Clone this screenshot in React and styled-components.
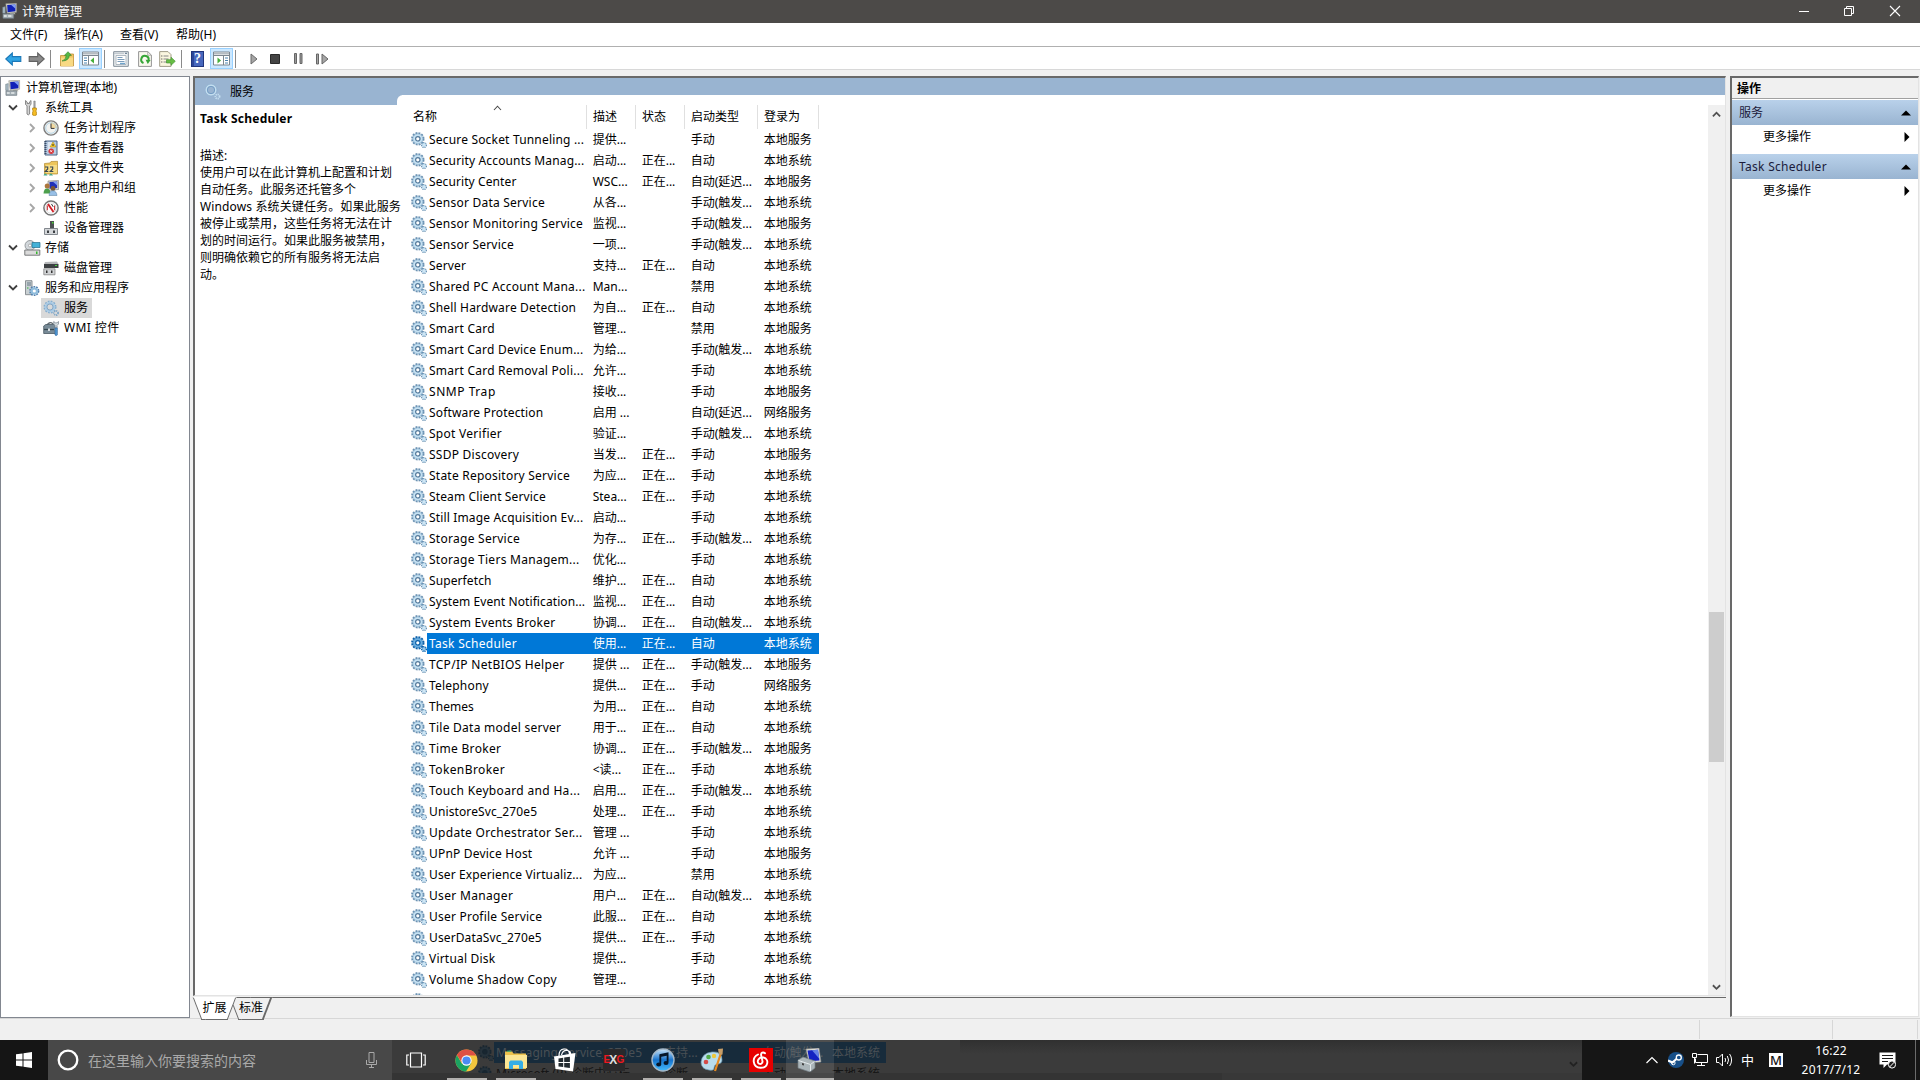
import React from "react";
import styled, { createGlobalStyle, css } from "styled-components";

const GlobalStyle = createGlobalStyle`
  * { box-sizing: border-box; }
  body {
    margin: 0;
    overflow: hidden;
    background: #f0f0f0;
    color: #000;
    font: 12px/20px "Noto Sans", "Noto Sans CJK SC", sans-serif;
  }
  svg { display: block; flex: none; }
`;

const Desktop = styled.div`
  width: 1920px;
  height: 1080px;
  display: flex;
  flex-direction: column;
  overflow: hidden;
  white-space: nowrap;
`;

/* ---------- window chrome ---------- */

const TitleBar = styled.header`
  height: 23px;
  flex: none;
  display: flex;
  align-items: center;
  padding: 0 19px 2px 2px;
  background: #4c4a48;
  color: #fff;
`;
const WindowTitle = styled.span`
  flex: 1;
  padding-left: 4px;
  line-height: 20px;
  padding-top: 2px;
`;
const WindowButtons = styled.div`
  display: flex;
  gap: 34px;
`;
const MenuBar = styled.nav`
  height: 24px;
  flex: none;
  display: flex;
  padding: 1px 0 0 10px;
  gap: 16px;
  background: #fff;
  border-bottom: 1px solid #b0b0b0;
`;
const MenuItem = styled.span`
  width: ${(p) => p.$w}px;
  line-height: 22px;
  letter-spacing: ${(p) => p.$track || 0}px;
`;
const Toolbar = styled.div`
  height: 23px;
  flex: none;
  display: flex;
  align-items: center;
  padding-top: 1px;
  background: #fff;
  border-bottom: 1px solid #d8d8d8;
`;
const ToolButton = styled.div`
  width: ${(p) => p.$w}px;
  margin-left: ${(p) => p.$ml || 0}px;
  height: 21px;
  display: flex;
  align-items: center;
  justify-content: center;
  flex: none;
  ${(p) =>
    p.$on &&
    css`
      background: #cce8ff;
      border: 1px solid #99d1ff;
    `}
`;
const ToolSeparator = styled.i`
  width: 1px;
  height: 18px;
  background: #8a8a8a;
  margin-left: ${(p) => p.$ml}px;
`;
const Workspace = styled.main`
  height: 948px;
  flex: none;
  display: flex;
  padding-top: 6px;
`;

/* ---------- console tree ---------- */

const TreePanel = styled.aside`
  width: 190px;
  height: 942px;
  flex: none;
  padding-top: 1px;
  background: #fff;
  border: 1px solid #828790;
`;
const TreeRow = styled.div`
  height: 20px;
  display: flex;
  align-items: center;
  padding-left: ${(p) => [4, 5, 24][p.$level]}px;
`;
const TreeArrow = styled.span`
  width: 13px;
  display: flex;
  justify-content: center;
  flex: none;
`;
const TreeLabel = styled.span`
  display: flex;
  align-items: center;
  height: 20px;
  margin-left: ${(p) => p.$ml}px;
  padding: 0 4px 0 2px;
  gap: 5px;
  letter-spacing: ${(p) => p.$track || 0}px;
  background: ${(p) => (p.$selected ? "#d9d9d9" : "transparent")};
`;
const TreeIcon = styled.span`
  width: 16px;
  flex: none;
`;

/* ---------- centre panel ---------- */

const Center = styled.section`
  width: 1533px;
  margin-left: 3px;
  flex: none;
  display: flex;
  flex-direction: column;
`;
const ServicePane = styled.div`
  height: 920px;
  flex: none;
  display: flex;
  flex-direction: column;
  background: #fff;
  border-style: solid;
  border-width: 2px 1px 1px 2px;
  border-color: #696969 #e3e3e3 #e3e3e3 #696969;
`;
const PaneHeader = styled.div`
  height: 17px;
  flex: none;
  background: #99b4d1;
`;
const PaneBody = styled.div`
  flex: 1;
  min-height: 0;
  display: flex;
`;
const DetailColumn = styled.div`
  width: 202px;
  flex: none;
`;
const DetailHeader = styled.div`
  height: 27px;
  margin-top: -17px;
  display: flex;
  align-items: center;
  padding: 1px 0 0 10px;
  gap: 9px;
  background: #99b4d1;
`;
const DetailText = styled.div`
  padding: 4px 0 0 5px;
  line-height: 17px;
`;
const DetailName = styled.div`
  height: 38px;
  line-height: 20px;
  font-weight: 700;
  letter-spacing: 0.24px;
`;
const DetailLine = styled.div`
  letter-spacing: ${(p) => p.$track || 0}px;
`;
const ListColumn = styled.div`
  flex: 1;
  min-width: 0;
  display: flex;
  flex-direction: column;
  overflow: hidden;
`;
const HeaderCorner = styled.div`
  height: 10px;
  flex: none;
  background: linear-gradient(#99b4d1, #99b4d1) 0 0 / 5px 10px no-repeat;
`;
const CornerFill = styled.div`
  height: 10px;
  background: #fff;
  border-top-left-radius: 6px;
`;
const ListHeader = styled.div`
  height: 24px;
  flex: none;
  display: flex;
  padding-left: 9px;
`;
const HeaderCell = styled.div`
  width: ${(p) => p.$w}px;
  height: 24px;
  padding: 2px 0 0 ${(p) => p.$pl || 6}px;
  line-height: 20px;
  border-right: 1px solid #e0e0e0;
  position: relative;
`;
const SortMark = styled.svg`
  position: absolute;
  left: 87px;
  top: 0;
`;
const Rows = styled.div`
  flex: 1;
  min-height: 0;
  overflow: hidden;
  padding-left: 14px;
`;
const Row = styled.div`
  height: 21px;
  display: flex;
  align-items: center;
`;
const RowCells = styled.div`
  height: 21px;
  width: 392px;
  display: flex;
  line-height: 21px;
  padding-left: 2px;
  color: ${(p) => (p.$selected ? "#fff" : "#000")};
  background: ${(p) => (p.$selected ? "#0078d7" : "transparent")};
`;
const Cell = styled.span`
  width: ${(p) => p.$w}px;
  flex: none;
  letter-spacing: ${(p) => p.$track || 0}px;
`;
const ScrollBar = styled.div`
  width: 17px;
  flex: none;
  margin-top: 10px;
  display: flex;
  flex-direction: column;
  align-items: center;
  background: #f0f0f0;
`;
const ScrollEnd = styled.div`
  height: 17px;
  padding-top: 1px;
  display: flex;
  align-items: center;
`;
const ScrollTrack = styled.div`
  flex: 1;
  width: 15px;
  padding-top: 490px;
`;
const ScrollThumb = styled.div`
  height: 150px;
  background: #cdcdcd;
`;
const TabStrip = styled.div`
  height: 21px;
  margin-top: 1px;
  display: flex;
  border-top: 1px solid #696969;
`;
const Tab = styled.div`
  width: ${(p) => p.$w}px;
  height: 21px;
  margin: -1px 0 0 ${(p) => p.$ml}px;
  position: relative;
  text-align: center;
  line-height: 22px;
  z-index: ${(p) => (p.$active ? 2 : 1)};
  &::before,
  &::after {
    content: "";
    position: absolute;
    z-index: -1;
    top: 0;
    height: 21px;
    width: 60%;
    background: ${(p) => (p.$active ? "#fff" : "#f0f0f0")};
    border-bottom: 1px solid #696969;
    border-top: 1px solid ${(p) => (p.$active ? "#fff" : "#696969")};
  }
  &::before {
    left: 0;
    transform: skewX(21deg);
    border-left: 1px solid #696969;
  }
  &::after {
    right: 0;
    transform: skewX(-21deg);
    border-right: ${(p) => (p.$active ? 1 : 2)}px solid #696969;
  }
`;

/* ---------- actions panel ---------- */

const ActionsPanel = styled.aside`
  width: 189px;
  height: 941px;
  margin-left: 4px;
  flex: none;
  background: #fff;
  border-style: solid;
  border-width: 2px 1px 1px 2px;
  border-color: #696969 #e3e3e3 #e3e3e3 #696969;
`;
const ActionsTitle = styled.div`
  height: 21px;
  padding-left: 5px;
  font-weight: 700;
  line-height: 22px;
  background: #f0f0f0;
  border-bottom: 1px solid #a0a0a0;
`;
const ActionGroup = styled.div`
  height: 25px;
  margin-top: ${(p) => p.$mt}px;
  display: flex;
  align-items: center;
  justify-content: space-between;
  padding: 0 7px 0 7px;
  color: #1b1b3a;
  letter-spacing: ${(p) => p.$track || 0}px;
  background: linear-gradient(#b9d1ea, #99b4d1);
`;
const ActionItem = styled.div`
  height: 24px;
  display: flex;
  align-items: center;
  justify-content: space-between;
  padding: 0 8px 0 31px;
`;

/* ---------- status bar ---------- */

const StatusBar = styled.footer`
  height: 22px;
  flex: none;
  display: flex;
  justify-content: flex-end;
  padding: 1px 2px 1px 0;
  border-top: 1px solid #d7d7d7;
`;
const StatusCell = styled.div`
  width: ${(p) => p.$w}px;
  border-right: 1px solid #d7d7d7;
`;

/* ---------- taskbar ---------- */

const Taskbar = styled.footer`
  height: 40px;
  flex: none;
  display: flex;
  position: relative;
  background: #161616;
  color: #fff;
`;
const StartButton = styled.div`
  width: 48px;
  display: flex;
  align-items: center;
  justify-content: center;
  background: #151515;
`;
const SearchBox = styled.div`
  width: 344px;
  display: flex;
  align-items: center;
  padding: 0 15px 0 9px;
  gap: 9px;
  background: #484848;
  color: #a9a9a9;
  font-size: 14px;
`;
const SearchHint = styled.span`
  flex: 1;
  padding-top: 2px;
`;
const TaskArea = styled.div`
  width: 1190px;
  display: flex;
  position: relative;
  background:
    linear-gradient(#343434, #343434) 0 33px / 830px 7px no-repeat,
    linear-gradient(#3b3b3b 33px, #383838 33px);
`;
const Backdrop = styled.div`
  position: absolute;
  left: 86px;
  top: 2px;
  width: 410px;
  height: 31px;
  overflow: hidden;
`;
const BackdropRow = styled.div`
  display: flex;
  align-items: center;
  height: 21px;
  color: ${(p) => (p.$selected ? "#494f54" : "#151515")};
`;
const BackdropCells = styled.div`
  width: 392px;
  height: 21px;
  display: flex;
  padding-left: 2px;
  line-height: 22px;
  background: ${(p) => (p.$selected ? "#172b3b" : "transparent")};
`;
const TaskShade = styled.div`
  position: absolute;
  left: 568px;
  right: 0;
  top: 0;
  height: 14px;
  background: linear-gradient(#303030, #3b3b3b00);
`;
const BackdropArrow = styled.div`
  position: absolute;
  right: 4px;
  top: 20px;
`;
const TaskButton = styled.div`
  width: ${(p) => p.$w || 49}px;
  height: 40px;
  padding-right: 2px;
  display: flex;
  align-items: center;
  justify-content: center;
  position: relative;
  background: ${(p) => (p.$active ? "rgba(255,255,255,0.1)" : "transparent")};
  &::after {
    content: "";
    display: ${(p) => (p.$open ? "block" : "none")};
    position: absolute;
    bottom: 0;
    left: ${(p) => (p.$active ? 0 : 4)}px;
    right: ${(p) => (p.$active ? 0 : 5)}px;
    height: 2px;
    background: #b2b0ae;
  }
`;
const TaskViewButton = styled(TaskButton)`
  width: 51px;
  padding-right: 3px;
`;
const Tray = styled.div`
  flex: 1;
  display: flex;
  align-items: center;
  padding-left: 64px;
`;
const TrayItem = styled.div`
  width: ${(p) => p.$w}px;
  margin-right: ${(p) => p.$mr || 0}px;
  display: flex;
  justify-content: center;
  flex: none;
`;
const InputMark = styled.span`
  font: 13px/16px "Noto Sans CJK SC", sans-serif;
`;
const ModeBox = styled.span`
  width: 14px;
  height: 14px;
  background: #fff;
  color: #111;
  font: 500 13px/14px "Noto Sans", sans-serif;
  text-align: center;
`;
const Clock = styled.div`
  width: 62px;
  margin-right: 17px;
  text-align: center;
  font-size: 12px;
  line-height: 19px;
  letter-spacing: 0.2px;
`;
const ShowDesktop = styled.i`
  width: 5px;
  height: 40px;
  margin-left: auto;
  border-left: 1px solid #6b6b6b;
`;

/* ---------- icons ---------- */

const GearIcon = ({ size = 16, selected, dark }) => {
  const edge = dark ? "#182630" : selected ? "#0a5fa8" : "#6b92b3";
  const body = dark ? "#25323b" : selected ? "#5aa2d8" : "#b3d6ec";
  const hub = dark ? "#25323b" : selected ? "#8cc4ee" : "#e9f4fb";
  return (
    <svg width={size} height={size} viewBox="0 0 16 16" fill="none">
      <circle cx="6.800" cy="6.800" r="5.700" stroke={edge} strokeWidth="2" strokeDasharray="1.900 1.080" />
      <circle cx="6.800" cy="6.800" r="5.100" fill={body} stroke={edge} strokeWidth=".4" />
      <circle cx="6.800" cy="6.800" r="3.700" stroke={hub} strokeWidth=".8" opacity=".6" />
      <circle cx="6.800" cy="6.800" r="2.200" fill={dark ? edge : "#fff"} stroke={dark || selected ? edge : "#54799a"} strokeWidth="1.200" />
      <circle cx="13" cy="13.100" r="2.300" stroke={edge} strokeWidth="1.500" strokeDasharray="1.100 .700" />
      <circle cx="13" cy="13.100" r="1.400" stroke={body} strokeWidth="1.300" />
    </svg>
  );
};

const TreeGearIcon = () => (
  <svg width="16" height="16" viewBox="0 0 16 16" fill="none">
    <circle cx="7" cy="7" r="5.600" stroke="#86aecf" strokeWidth="1.800" strokeDasharray="1.800 1.130" />
    <circle cx="7" cy="7" r="4.300" stroke="#a9cbe6" strokeWidth="2" />
    <circle cx="7" cy="7" r="3.100" stroke="#6c97be" strokeWidth=".8" />
    <circle cx="13" cy="13" r="2.100" stroke="#7ba4c7" strokeWidth="1.700" strokeDasharray="1.100 .700" />
  </svg>
);

const ServiceHeaderIcon = () => (
  <svg width="16" height="16" viewBox="0 0 16 16" fill="none">
    <circle cx="6" cy="6" r="4.900" stroke="#c5dff0" strokeWidth="2" />
    <circle cx="6" cy="6" r="3.700" stroke="#6f9ac2" strokeWidth=".9" />
    <circle cx="6" cy="6" r="5.900" stroke="#7fa5c8" strokeWidth=".5" />
    <circle cx="12.500" cy="12.500" r="2.100" stroke="#c5dff0" strokeWidth="1.800" strokeDasharray="1.100 .700" />
  </svg>
);

const ComputerIcon = ({ size = 16 }) => (
  <svg width={size} height={size} viewBox="0 0 17 17">
    <path d="M4 .8 15.500.3v9.500L5.500 11z" fill="#d6d6cc" stroke="#8d8d86" strokeWidth=".6" />
    <path d="M5.500 2 14.300 1.600v7.200L6 9.800z" fill="#1020b8" />
    <path d="M9.500 1.800 14.300 1.600v4.600z" fill="#7f9df2" />
    <path d="M9 10h4l1.500 2H8z" fill="#b5b5ab" />
    <path d="M.7 4.500 3.500 3.800V11H.7z" fill="#a5b7c1" stroke="#6a7880" strokeWidth=".5" />
    <path d="M1 11.500h11.500v4.800H1z" fill="#a2adb3" stroke="#68737b" strokeWidth=".7" />
    <path d="M2 13h3v1.500H2zm4.500 0H10v1.500H6.500z" fill="#e7eced" />
  </svg>
);

const ToolsIcon = () => (
  <svg width="16" height="16" viewBox="0 0 16 16">
    <path d="M1.500.500v4L3 5.800V14q1.200 1.800 2.600 0V5.800L7 4.500v-4L5.400 2v1.500H3.200V2z" fill="#d4d4d4" stroke="#707070" strokeWidth=".8" />
    <path d="M9.800 1h1.400v7H9.800z" fill="#aaa" stroke="#777" strokeWidth=".5" />
    <path d="M8.600 8h3.800v2l-.7 1 .7 1v3q-1.800 1.200-3.800 0v-3l.7-1-.7-1z" fill="#f6bd24" stroke="#ad7c08" strokeWidth=".7" />
  </svg>
);

const ClockIcon = () => (
  <svg width="16" height="16" viewBox="0 0 16 16">
    <circle cx="8" cy="8" r="7.100" fill="#f3f3f0" stroke="#7e7e7e" strokeWidth="1.400" />
    <path d="M8 2a6 6 0 0 1 6 6H8z" fill="#f2d9a0" />
    <circle cx="8" cy="8" r="5.300" fill="none" stroke="#a3cde5" strokeWidth=".8" />
    <path d="M8 3.500V8.400h3.500" fill="none" stroke="#333" />
  </svg>
);

const EventIcon = () => (
  <svg width="16" height="16" viewBox="0 0 16 16">
    <path d="M2 1h12v14H2z" fill="#b7cbe2" stroke="#4c6485" />
    <path d="M2.500 1v14" stroke="#3b4d67" strokeWidth="2" strokeDasharray="1 1" />
    <path d="M5 3h4M5 5h3M5 7h3M5 9h2" stroke="#fff" />
    <path d="m10 2 3 5H7z" fill="#ffd42e" stroke="#ae8100" strokeWidth=".5" />
    <path d="M10 4v2" stroke="#222" />
    <circle cx="8.200" cy="11.200" r="2.700" fill="#d8373b" />
    <path d="m7.200 10.200 2 2m0-2-2 2" stroke="#fff" strokeWidth=".8" />
  </svg>
);

const SharedIcon = () => (
  <svg width="16" height="16" viewBox="0 0 16 16">
    <path d="M1.500 3.500 7 3l1-1.500 6.500-.2V14h-13z" fill="#edc55b" stroke="#b18b32" strokeWidth=".7" />
    <path d="M3 5h11v8H3z" fill="#f6dc86" />
    <path d="M2 7h2.700v2L2.300 11.500h3M7 7h2.700v2l-2.400 2.500h3" fill="none" stroke="#374655" strokeWidth="1.100" />
    <path d="M.5 15.500q1.500-4 4 0zm5.500 0q1.800-4 4 0z" fill="#46a88b" />
  </svg>
);

const UsersIcon = () => (
  <svg width="16" height="16" viewBox="0 0 16 16">
    <path d="m5 1 10.500-.5V9.500L5 10.500z" fill="#d6d6d1" stroke="#7a7a76" strokeWidth=".6" />
    <path d="m6.500 2 7.700-.4v6.500l-7.700.700z" fill="#2030b8" />
    <path d="m10 1.800 4.200-.2v4z" fill="#7f9df2" />
    <circle cx="4.200" cy="6" r="2.500" fill="#ad763e" />
    <path d="M.5 13.500Q1 8 4.200 8.500T7.500 13.500z" fill="#4da04d" />
    <circle cx="10" cy="8.500" r="2.400" fill="#7a5530" />
    <path d="M6 15.500q.5-5 4-4.800t4 4.800z" fill="#97bfe6" stroke="#557d9e" strokeWidth=".5" />
  </svg>
);

const PerfIcon = () => (
  <svg width="16" height="16" viewBox="0 0 16 16">
    <circle cx="8" cy="8" r="7.100" fill="#fff" stroke="#757575" strokeWidth="1.500" />
    <circle cx="8" cy="8" r="5.200" fill="none" stroke="#d4d4d4" strokeWidth=".7" />
    <path d="M4.300 5.500v4.800M11.600 5.500v4.800" stroke="#c82c32" strokeWidth="1.100" />
    <path d="m5 4 5.500 8" stroke="#d21e25" strokeWidth="1.900" />
    <path d="m8.500 4 1.700 2.800" stroke="#333" />
  </svg>
);

const DeviceIcon = () => (
  <svg width="16" height="16" viewBox="0 0 16 16">
    <path d="M7 1h4v8H7z" fill="#4d5153" />
    <path d="M9 2h1.500v1.500H9z" fill="#49db37" />
    <path d="M1.500 8.500h13v6h-13z" fill="#d4d7da" stroke="#777d83" strokeWidth=".9" />
    <path d="M4 10.500h2v2.500H4zm6 0h2v2.500h-2z" fill="#3b3e42" />
  </svg>
);

const StorageIcon = () => (
  <svg width="17" height="16" viewBox="0 0 17 16">
    <circle cx="6" cy="5.500" r="5" fill="#d2d7db" stroke="#84898d" strokeWidth=".8" />
    <circle cx="6" cy="5.500" r="1.500" fill="#fff" stroke="#888" strokeWidth=".6" />
    <path d="M8 2.500h8v5H8z" fill="#43b1d7" stroke="#216e8e" strokeWidth=".7" />
    <path d="M.8 10h15v5.200H.8z" fill="#dadada" stroke="#77797a" />
    <path d="M12 11.500h1.500V14H12z" fill="#35b72c" />
  </svg>
);

const DiskIcon = () => (
  <svg width="16" height="16" viewBox="0 0 16 16">
    <path d="m2 2 12-.5 1.500 2.700H1z" fill="#b6b8ba" />
    <path d="M1 4h14.500v4H1z" fill="#3d4143" />
    <path d="M12 5h2v1h-2z" fill="#44d83d" />
    <path d="M.8 8.800H12v6H.8z" fill="#d1d3d5" stroke="#777" strokeWidth=".7" />
    <path d="M3 10.500h1.500V13H3zm5 0h1.500V13H8z" fill="#333" />
  </svg>
);

const ServerGearIcon = () => (
  <svg width="16" height="16" viewBox="0 0 16 16" fill="none">
    <path d="M1.500.7H8v14H1.500z" fill="#c9d0d3" stroke="#80878b" strokeWidth=".9" />
    <path d="M3 3h4M3 5h4" stroke="#657783" />
    <path d="M3 8h1.500" stroke="#2daf39" />
    <circle cx="10.300" cy="11" r="4.200" stroke="#527fad" strokeWidth="1.800" strokeDasharray="1.700 .940" />
    <circle cx="10.300" cy="11" r="2.700" fill="#fff" stroke="#8fbcdc" strokeWidth="2.200" />
  </svg>
);

const WmiIcon = () => (
  <svg width="17" height="16" viewBox="0 0 17 16">
    <path d="M4 5q3-4 6-1" fill="none" stroke="#636b70" strokeWidth="1.300" />
    <path d="m.7 6 2-1.500h9l2 1.500v7.500H.7z" fill="#788b97" stroke="#4a5963" strokeWidth=".8" />
    <path d="M1 9.500h10" stroke="#374850" strokeWidth="1.300" />
    <path d="M5 8.500h2V11H5z" fill="#dae0e3" />
    <path d="M10.700 1.500V4l1.300 1.500V8h2V5.500L15.500 4V1.500L14 2.800h-1.700z" fill="#d5dce0" stroke="#65717a" strokeWidth=".6" />
    <path d="M12 8h2.300v7l-1 .8-1.300-.8z" fill="#539bd5" stroke="#286097" strokeWidth=".6" />
  </svg>
);

const ArrowIcon = ({ flip, fill, edge }) => (
  <svg width="17" height="16" viewBox="0 0 17 16">
    <path
      transform={flip ? "translate(17 0) scale(-1 1)" : undefined}
      d="M.8 8 7.300 2v3.600h8.500v4.800H7.300V14z"
      fill={fill}
      stroke={edge}
      strokeWidth="1.100"
    />
  </svg>
);

const UpFolderIcon = () => (
  <svg width="16" height="16" viewBox="0 0 16 16">
    <path d="M1.500 4.500h5L8 3h6.500v12h-13z" fill="#efc363" stroke="#c39338" strokeWidth=".8" />
    <path d="M2 6.500h12V15H2z" fill="#f8d983" />
    <path d="M3 10Q7 9 7.200 4.400H5.400L9 .7l3.400 3.700h-2Q9.800 10 3 10z" fill="#54b845" stroke="#2e8228" strokeWidth=".6" />
  </svg>
);

const PaneIcon = ({ right }) => (
  <svg width="17" height="15" viewBox="0 0 17 15">
    <path d="M.5 1h16v13H.5z" fill="#fff" stroke="#7d8790" />
    <path d="M1 2.500h15" stroke="#b4bbc1" strokeWidth="2" />
    <path d="M.5 4.500h16" stroke="#7d8790" />
    <path d={right ? "M10.5 5v9" : "M6.5 5v9"} stroke="#7d8790" />
    <path d={right ? "M12 7h3M12 9.5h3M12 12h3" : "M2 7h3M2 9.5h3M2 12h3"} stroke="#4c84b0" />
    <path d={right ? "m4.5 6.5 3.5 3-3.5 3z" : "m12 6.5-3.5 3 3.5 3z"} fill="#45ae39" />
  </svg>
);

const PropertiesIcon = () => (
  <svg width="16" height="16" viewBox="0 0 16 16">
    <path d="M.7.7h14.600v14.600H.7z" fill="#edf0f2" stroke="#7f8b96" />
    <path d="M1 2.300h10" stroke="#b7c0c7" />
    <path d="M12 2.300h2" stroke="#526b80" />
    <path d="M3 4.500h10v9H3z" fill="#fff" stroke="#9faab4" strokeWidth=".8" />
    <path d="M4.500 6.500h5M4.500 8.500h7M4.500 10.500h7" stroke="#7b9cba" />
    <path d="M7 12.500h5" stroke="#6fa4cb" strokeWidth="1.400" />
  </svg>
);

const RefreshIcon = () => (
  <svg width="14" height="16" viewBox="0 0 14 16">
    <path d="M.6.6h9.200l3.600 3.500v11.300H.6z" fill="#faf9ef" stroke="#959595" />
    <path d="M9.700.6v3.600h3.600" fill="none" stroke="#959595" strokeWidth=".7" />
    <path d="M5.500 12A3.700 3.700 0 1 1 10.500 9.500" fill="none" stroke="#37a638" strokeWidth="2" />
    <path d="m7.600 8.700 5 .2-2.800 4z" fill="#37a638" />
  </svg>
);

const ExportIcon = () => (
  <svg width="17" height="16" viewBox="0 0 17 16">
    <path d="M.7.6H9l3 3v11.800H.7z" fill="#faf6df" stroke="#a09c88" />
    <path d="M4.500 5h5M4.500 8h5M4.500 11h5" stroke="#888" />
    <path d="M2.300 5h1M2.300 8h1M2.300 11h1" stroke="#333" />
    <path d="M7.500 8.700H12V6.200l4.300 4.100-4.300 4V12H7.500z" fill="#67bd45" stroke="#3c8f2c" strokeWidth=".6" />
  </svg>
);

const HelpSquare = styled.span`
  width: 13px;
  height: 16px;
  border: 1px solid #21357c;
  background: linear-gradient(90deg, #2c479a 2px, #4767bd 2px);
  color: #fff;
  font: 700 14px/14px "Liberation Serif", serif;
  text-align: center;
`;

const Chevron = ({ dir = "down", color = "#404040", size = 9, width = 1.8 }) => {
  const paths = {
    down: "M1 2.5 5 6.5 9 2.5",
    up: "M1 7 5 3 9 7",
    right: "M3 1 7 5 3 9",
  };
  return (
    <svg width={size} height={size} viewBox="0 0 10 10" fill="none">
      <path d={paths[dir]} stroke={color} strokeWidth={width} />
    </svg>
  );
};

const ChromeIcon = () => (
  <svg width="23" height="23" viewBox="0 0 24 24">
    <circle cx="12" cy="12" r="11.500" fill="#f4c63d" />
    <path d="M2 6.200A11.500 11.500 0 0 0 11.500 23.500L17 14.500 7 15z" fill="#1ba362" />
    <path d="M12 6.700H22.200A11.500 11.500 0 0 0 2 6.200L7.400 14.600z" fill="#dd5044" />
    <circle cx="12" cy="12" r="5.400" fill="#fff" />
    <circle cx="12" cy="12" r="4.300" fill="#4b8bf4" />
  </svg>
);

const ExplorerIcon = () => (
  <svg width="22" height="20" viewBox="0 0 22 20">
    <path d="M0 1.500h7l1.500 2H21V19H0z" fill="#edc24d" />
    <path d="M2 1.200h4" stroke="#3ebe6f" />
    <path d="M0 5h22v13H0z" fill="#fce694" />
    <path d="M4 19v-7l1.500-1.500h11L18 12v7h-4v-4H8v4z" fill="#36aee6" />
  </svg>
);

const StoreIcon = () => (
  <svg width="22" height="24" viewBox="0 0 22 24">
    <path d="M5 8Q5 1 10 1t5.500 5M7.500 7Q9 2 13 2.500t3.500 4" fill="none" stroke="#fff" strokeWidth="1.200" />
    <path d="M0 8.500 21.500 5 19 23.500 1.500 21z" fill="#fff" />
    <path d="m4.500 10.600 4.700-.8v4.300H4.500zm5.700-1 5.700-.9v5.400h-5.700zM4.500 15h4.700v4.100l-4.700-.6zm5.700 0h5.700v5l-5.700-.8z" fill="#222b30" />
  </svg>
);

const GameIcon = styled.span`
  width: 22px;
  height: 22px;
  display: flex;
  justify-content: center;
  background: #29292b;
  color: #ed1820;
  font: 700 10px/22px "Liberation Sans", sans-serif;
  letter-spacing: -0.8px;
  b { color: #ddd; font-size: 12px; }
`;

const MusicIcon = () => (
  <svg width="24" height="24" viewBox="0 0 24 24">
    <defs>
      <linearGradient id="disc" x2="0" y2="1">
        <stop stopColor="#cce6fa" />
        <stop offset=".5" stopColor="#1773cc" />
        <stop offset="1" stopColor="#45bdff" />
      </linearGradient>
    </defs>
    <circle cx="12" cy="12" r="11" fill="url(#disc)" stroke="#a6b9c9" strokeWidth="1.400" />
    <path d="M9.300 16V7l7.300-1.600v9" fill="none" stroke="#07172a" strokeWidth="1.800" />
    <path d="m9 8 8-1.500" stroke="#07172a" strokeWidth="2" />
    <ellipse cx="7.700" cy="16.500" rx="2.500" ry="2" fill="#07172a" />
    <ellipse cx="15" cy="15" rx="2.500" ry="2" fill="#07172a" />
  </svg>
);

const PaintIcon = () => (
  <svg width="24" height="24" viewBox="0 0 24 24">
    <path d="M1 14Q2 5 12 4t10 8q0 4-5 4-3 1-3 4t-5 2Q1 21 1 14z" fill="#b9dced" stroke="#6f9bb1" strokeWidth=".7" />
    <circle cx="6" cy="14" r="2.300" fill="#d44c49" />
    <circle cx="8.500" cy="9" r="2.300" fill="#51ab48" />
    <circle cx="14" cy="8" r="2.200" fill="#efc83a" />
    <path d="m21 5-6 18" stroke="#e68a21" strokeWidth="2.200" />
    <path d="m18 1 5-.5-.5 6-3.500.5z" fill="#c79e68" />
  </svg>
);

const NetEaseIcon = () => (
  <svg width="24" height="24" viewBox="0 0 24 24">
    <path d="M0 0h24v24H0z" fill="#e60000" />
    <path
      d="M9 6.500C2.500 9.500 3.500 19.500 11.500 19.800c7.500.2 9.300-8.500 3-10.300-4.700-1.200-7.400 4.500-4.500 6.200 2.100 1 4-.8 3.400-3L12.200 7.500C11.500 4.500 14.300 3.700 16 5.300"
      fill="none"
      stroke="#fff"
      strokeWidth="1.900"
      strokeLinecap="round"
    />
  </svg>
);

const ManageIcon = () => (
  <svg width="25" height="24" viewBox="0 0 25 24">
    <path d="m9 1 13-1 2 14-12 1z" fill="#deded6" stroke="#888" strokeWidth=".6" />
    <path d="m10.500 2.500 10.500-.8 1.500 10.800-10 .8z" fill="#1422c2" />
    <path d="m15 2.200 6-.5 1.300 9z" fill="#6682e5" />
    <path d="m1 12 5-3 12 4v7l-5 4-12-4z" fill="#abb5b9" stroke="#747f85" strokeWidth=".7" />
    <path d="m1.500 12.500 12 4 4-3M13.500 16.500V23" fill="none" stroke="#e3e9eb" />
    <path d="m5 15 2 .6v2l-2-.6z" fill="#444" />
  </svg>
);

/* ---------- data ---------- */

const tree = [
  [0, "", ComputerIcon, "计算机管理(本地)"],
  [1, "down", ToolsIcon, "系统工具"],
  [2, "right", ClockIcon, "任务计划程序"],
  [2, "right", EventIcon, "事件查看器"],
  [2, "right", SharedIcon, "共享文件夹"],
  [2, "right", UsersIcon, "本地用户和组"],
  [2, "right", PerfIcon, "性能"],
  [2, "", DeviceIcon, "设备管理器"],
  [1, "down", StorageIcon, "存储"],
  [2, "", DiskIcon, "磁盘管理"],
  [1, "down", ServerGearIcon, "服务和应用程序"],
  [2, "", TreeGearIcon, "服务"],
  [2, "", WmiIcon, "WMI 控件", 0.4],
];

const M = "手动";
const A = "自动";
const MT = "手动(触发...";
const AT = "自动(触发...";
const AD = "自动(延迟...";
const X = "禁用";
const SYS = "本地系统";
const SVC = "本地服务";
const NET = "网络服务";

/* name, description, running, startup type, log on as, name tracking */
const services = [
  ["Secure Socket Tunneling ...", "提供...", 0, M, SVC, 0.18],
  ["Security Accounts Manag...", "启动...", 1, A, SYS, 0.15],
  ["Security Center", "WSC...", 1, AD, SVC, 0.1],
  ["Sensor Data Service", "从各...", 0, MT, SYS, 0.23],
  ["Sensor Monitoring Service", "监视...", 0, MT, SVC, 0.24],
  ["Sensor Service", "一项...", 0, MT, SYS, 0.22],
  ["Server", "支持...", 1, A, SYS, 0.15],
  ["Shared PC Account Mana...", "Man...", 0, X, SYS, 0.22],
  ["Shell Hardware Detection", "为自...", 1, A, SYS, 0.17],
  ["Smart Card", "管理...", 0, X, SVC, 0.25],
  ["Smart Card Device Enum...", "为给...", 0, MT, SYS, 0.22],
  ["Smart Card Removal Poli...", "允许...", 0, M, SYS, 0.24],
  ["SNMP Trap", "接收...", 0, M, SVC, 0.55],
  ["Software Protection", "启用 ...", 0, AD, NET, 0.16],
  ["Spot Verifier", "验证...", 0, MT, SYS, 0.28],
  ["SSDP Discovery", "当发...", 1, M, SVC, 0.25],
  ["State Repository Service", "为应...", 1, M, SYS, 0.23],
  ["Steam Client Service", "Stea...", 1, M, SYS, 0.13],
  ["Still Image Acquisition Ev...", "启动...", 0, M, SYS, 0.15],
  ["Storage Service", "为存...", 1, MT, SYS, 0.27],
  ["Storage Tiers Managem...", "优化...", 0, M, SYS, 0.27],
  ["Superfetch", "维护...", 1, A, SYS, 0.1],
  ["System Event Notification...", "监视...", 1, A, SYS, 0.09],
  ["System Events Broker", "协调...", 1, AT, SYS, 0.22],
  ["Task Scheduler", "使用...", 1, A, SYS, 0.29],
  ["TCP/IP NetBIOS Helper", "提供 ...", 1, MT, SVC, 0.3],
  ["Telephony", "提供...", 1, M, NET, 0.2],
  ["Themes", "为用...", 1, A, SYS, 0.05],
  ["Tile Data model server", "用于...", 1, A, SYS, 0.26],
  ["Time Broker", "协调...", 1, MT, SVC, 0.32],
  ["TokenBroker", "<读...", 1, M, SYS, 0.4],
  ["Touch Keyboard and Ha...", "启用...", 1, MT, SYS, 0.33],
  ["UnistoreSvc_270e5", "处理...", 1, M, SYS, 0.12],
  ["Update Orchestrator Ser...", "管理 ...", 0, M, SYS, 0.3],
  ["UPnP Device Host", "允许 ...", 0, M, SVC, 0.2],
  ["User Experience Virtualiz...", "为应...", 0, X, SYS, 0.13],
  ["User Manager", "用户...", 1, AT, SYS, 0.33],
  ["User Profile Service", "此服...", 1, A, SYS, 0.22],
  ["UserDataSvc_270e5", "提供...", 1, M, SYS, 0.12],
  ["Virtual Disk", "提供...", 0, M, SYS, 0.2],
  ["Volume Shadow Copy", "管理...", 0, M, SYS, 0.35],
];

const description = [
  "描述:",
  "使用户可以在此计算机上配置和计划",
  "自动任务。此服务还托管多个",
  "Windows 系统关键任务。如果此服务",
  "被停止或禁用，这些任务将无法在计",
  "划的时间运行。如果此服务被禁用，",
  "则明确依赖它的所有服务将无法启",
  "动。",
];

function ConsoleTree() {
  return (
    <TreePanel>
      {tree.map(([level, arrow, Icon, label, track]) => (
        <TreeRow key={label} $level={level}>
          {level > 0 && (
            <TreeArrow>
              {arrow && <Chevron dir={arrow} size={10} color={arrow === "down" ? "#404040" : "#a6a6a6"} />}
            </TreeArrow>
          )}
          <TreeLabel $ml={level === 0 ? -2 : 3} $track={track} $selected={label === "服务"}>
            <TreeIcon><Icon /></TreeIcon>
            {label}
          </TreeLabel>
        </TreeRow>
      ))}
    </TreePanel>
  );
}

function ServiceList() {
  return (
    <ListColumn>
      <HeaderCorner>
        <CornerFill />
      </HeaderCorner>
      <ListHeader>
        <HeaderCell $w={181} $pl={7}>
          名称
          <SortMark width="9" height="6" viewBox="0 0 9 6" fill="none">
            <path d="M1 5 4.500 1.200 8 5" stroke="#4a4a4a" strokeWidth="1.100" />
          </SortMark>
        </HeaderCell>
        <HeaderCell $w={49}>描述</HeaderCell>
        <HeaderCell $w={49}>状态</HeaderCell>
        <HeaderCell $w={73}>启动类型</HeaderCell>
        <HeaderCell $w={61}>登录为</HeaderCell>
      </ListHeader>
      <Rows>
        {services.map(([name, desc, running, type, account, track]) => {
          const selected = name === "Task Scheduler";
          return (
            <Row key={name}>
              <GearIcon selected={selected} />
              <RowCells $selected={selected}>
                <Cell $w={163.7} $track={track}>{name}</Cell>
                <Cell $w={49}>{desc}</Cell>
                <Cell $w={49}>{running ? "正在..." : ""}</Cell>
                <Cell $w={73}>{type}</Cell>
                <Cell $w={55}>{account}</Cell>
              </RowCells>
            </Row>
          );
        })}
        <Row>
          <GearIcon />
        </Row>
      </Rows>
    </ListColumn>
  );
}

const UpTriangle = () => (
  <svg width="10" height="6" viewBox="0 0 10 6"><path d="M0 5.500 5 .5l5 5z" /></svg>
);
const RightTriangle = () => (
  <svg width="6" height="10" viewBox="0 0 6 10"><path d="M.5 0v10l5-5z" /></svg>
);

export default function App() {
  return (
    <Desktop>
      <GlobalStyle />
      <TitleBar>
        <ComputerIcon size={16} />
        <WindowTitle>计算机管理</WindowTitle>
        <WindowButtons>
          <svg width="12" height="12" viewBox="0 0 12 12"><path d="M2 6.500h10" stroke="#fff" /></svg>
          <svg width="12" height="12" viewBox="0 0 12 12" fill="none" stroke="#fff"><path d="M1.500 3.500h7v7h-7zM3.500 3V1.500h7v7H9" /></svg>
          <svg width="12" height="12" viewBox="0 0 12 12"><path d="m1 1 10 10m0-10L1 11" stroke="#fff" strokeWidth="1.100" /></svg>
        </WindowButtons>
      </TitleBar>

      <MenuBar>
        <MenuItem $w={38} $track={-0.05}>文件(F)</MenuItem>
        <MenuItem $w={40}>操作(A)</MenuItem>
        <MenuItem $w={40}>查看(V)</MenuItem>
        <MenuItem $w={40}>帮助(H)</MenuItem>
      </MenuBar>

      <Toolbar>
        <ToolButton $w={17} $ml={5}><ArrowIcon fill="#31a5e4" edge="#1c78b8" /></ToolButton>
        <ToolButton $w={17} $ml={6}><ArrowIcon flip fill="#8b8b8b" edge="#626262" /></ToolButton>
        <ToolSeparator $ml={5} />
        <ToolButton $w={16} $ml={8}><UpFolderIcon /></ToolButton>
        <ToolButton $w={23} $ml={4} $on><PaneIcon /></ToolButton>
        <ToolSeparator $ml={2} />
        <ToolButton $w={16} $ml={8}><PropertiesIcon /></ToolButton>
        <ToolButton $w={14} $ml={9}><RefreshIcon /></ToolButton>
        <ToolButton $w={17} $ml={7}><ExportIcon /></ToolButton>
        <ToolSeparator $ml={5} />
        <ToolButton $w={13} $ml={9}><HelpSquare>?</HelpSquare></ToolButton>
        <ToolButton $w={23} $ml={6} $on><PaneIcon right /></ToolButton>
        <ToolSeparator $ml={2} />
        <ToolButton $w={8} $ml={14}>
          <svg width="8" height="12" viewBox="0 0 8 12"><path d="M1 1v10l6-5z" fill="#a5a5a5" stroke="#6a6a6a" /></svg>
        </ToolButton>
        <ToolButton $w={10} $ml={12}>
          <svg width="10" height="10" viewBox="0 0 10 10"><path d="M.5.500h9v9h-9z" fill="#444" stroke="#2a2a2a" /></svg>
        </ToolButton>
        <ToolButton $w={9} $ml={14}>
          <svg width="9" height="11" viewBox="0 0 9 11"><path d="M.5.500h2v10h-2zm5.500 0h2v10H6z" fill="#999" stroke="#666" /></svg>
        </ToolButton>
        <ToolButton $w={13} $ml={13}>
          <svg width="13" height="12" viewBox="0 0 13 12"><path d="M.5 1h2v10h-2zM6 1v10l6-5z" fill="#a5a5a5" stroke="#666" /></svg>
        </ToolButton>
      </Toolbar>

      <Workspace>
        <ConsoleTree />
        <Center>
          <ServicePane>
            <PaneHeader />
            <PaneBody>
              <DetailColumn>
                <DetailHeader>
                  <ServiceHeaderIcon />
                  服务
                </DetailHeader>
                <DetailText>
                  <DetailName>Task Scheduler</DetailName>
                  {description.map((line) => (
                    <DetailLine key={line} $track={line.startsWith("Windows") ? 0.13 : 0}>{line}</DetailLine>
                  ))}
                </DetailText>
              </DetailColumn>
              <ServiceList />
              <ScrollBar>
                <ScrollEnd><Chevron dir="up" size={9} color="#505050" width={2} /></ScrollEnd>
                <ScrollTrack><ScrollThumb /></ScrollTrack>
                <ScrollEnd><Chevron dir="down" size={9} color="#505050" width={2} /></ScrollEnd>
              </ScrollBar>
            </PaneBody>
          </ServicePane>
          <TabStrip>
            <Tab $w={35} $ml={4} $active>扩展</Tab>
            <Tab $w={34} $ml={2}>标准</Tab>
          </TabStrip>
        </Center>
        <ActionsPanel>
          <ActionsTitle>操作</ActionsTitle>
          <ActionGroup $mt={1}>服务<UpTriangle /></ActionGroup>
          <ActionItem>更多操作<RightTriangle /></ActionItem>
          <ActionGroup $mt={5} $track={0.29}>Task Scheduler<UpTriangle /></ActionGroup>
          <ActionItem>更多操作<RightTriangle /></ActionItem>
        </ActionsPanel>
      </Workspace>

      <StatusBar>
        <StatusCell $w={1700} />
        <StatusCell $w={133} />
        <StatusCell $w={85} />
      </StatusBar>

      <Taskbar>
        <StartButton>
          <svg width="16" height="16" viewBox="0 0 16 16" fill="#fff">
            <path d="M0 2.300 6.500 1.400v6.100H0zM7.500 1.250 16 0v7.500H7.500zM0 8.500h6.500v6.100L0 13.700zM7.500 8.500H16V16l-8.500-1.200z" />
          </svg>
        </StartButton>
        <SearchBox>
          <svg width="22" height="22" viewBox="0 0 22 22" fill="none"><circle cx="11" cy="11" r="9.300" stroke="#fff" strokeWidth="2.300" /></svg>
          <SearchHint>在这里输入你要搜索的内容</SearchHint>
          <svg width="11" height="16" viewBox="0 0 11 16" fill="none" stroke="#a9a9a9">
            <path d="M3 .5h5v10H3zM.5 8v4.500h10V8M5.500 12.500v3M3 15.500h5" />
          </svg>
        </SearchBox>
        <TaskArea>
          <TaskShade />
          <Backdrop>
            <BackdropRow $selected>
              <GearIcon dark />
              <BackdropCells $selected>
                <Cell $w={168} $track={0.1}>Messaging Service_270e5</Cell>
                <Cell $w={98}>支持...</Cell>
                <Cell $w={70}>自动(触发...</Cell>
                <Cell $w={50}>本地系统</Cell>
              </BackdropCells>
            </BackdropRow>
            <BackdropRow>
              <GearIcon dark />
              <BackdropCells>
                <Cell $w={168}>Microsoft (R) 诊断中心标...</Cell>
                <Cell $w={98}>诊断...</Cell>
                <Cell $w={70}>手动</Cell>
                <Cell $w={50}>本地系统</Cell>
              </BackdropCells>
            </BackdropRow>
          </Backdrop>
          <BackdropArrow><Chevron size={9} color="#222" width={2} /></BackdropArrow>
          <TaskViewButton>
            <svg width="20" height="16" viewBox="0 0 20 16" fill="none" stroke="#fff" strokeWidth="1.200">
              <path d="M4.500 1h11v14h-11zM3 3H.8v10H3M17 3h2.200v10H17" />
            </svg>
          </TaskViewButton>
          <TaskButton $open><ChromeIcon /></TaskButton>
          <TaskButton $open><ExplorerIcon /></TaskButton>
          <TaskButton><StoreIcon /></TaskButton>
          <TaskButton><GameIcon>E<b>X</b>G</GameIcon></TaskButton>
          <TaskButton $open><MusicIcon /></TaskButton>
          <TaskButton $open><PaintIcon /></TaskButton>
          <TaskButton $open><NetEaseIcon /></TaskButton>
          <TaskButton $w={48} $open $active><ManageIcon /></TaskButton>
        </TaskArea>
        <Tray>
          <TrayItem $w={12} $mr={10}>
            <svg width="12" height="8" viewBox="0 0 12 8" fill="none"><path d="m.5 7 5.500-5.500L11.500 7" stroke="#fff" strokeWidth="1.200" /></svg>
          </TrayItem>
          <TrayItem $w={16} $mr={8}>
            <svg width="16" height="16" viewBox="0 0 16 16">
              <circle cx="8" cy="8" r="8" fill="#174f88" />
              <path d="m0 8.500 4.500 2L9 6.500" fill="none" stroke="#fff" strokeWidth="2.200" />
              <circle cx="10.800" cy="5.500" r="2.500" fill="#174f88" stroke="#fff" strokeWidth="1.300" />
              <circle cx="5.300" cy="11" r="1.800" fill="none" stroke="#fff" />
            </svg>
          </TrayItem>
          <TrayItem $w={16} $mr={8}>
            <svg width="16" height="14" viewBox="0 0 16 14" fill="none" stroke="#fff">
              <path d="M5.500 1.500h10v8h-12V5.500M.5.500h4v4h-4zM2.500 4.500v6M9.500 9.500v3M5 12.500h8" />
            </svg>
          </TrayItem>
          <TrayItem $w={17} $mr={8}>
            <svg width="17" height="14" viewBox="0 0 17 14" fill="none" stroke="#fff">
              <path d="M.5 4.500h2.500L6.500 1v12L3 9.500H.5zM9 5q1.200 2 0 4M11.300 3q2.500 4 0 8M13.600 1q4 6 0 12" />
            </svg>
          </TrayItem>
          <TrayItem $w={13} $mr={15}><InputMark>中</InputMark></TrayItem>
          <TrayItem $w={14} $mr={17}><ModeBox>M</ModeBox></TrayItem>
          <Clock>16:22<br />2017/7/12</Clock>
          <TrayItem $w={17}>
            <svg width="17" height="17" viewBox="0 0 17 17">
              <path d="M.5.500h16v12H8L4.500 16v-3.500h-4z" fill="#fff" />
              <path d="M3 3.500h11M3 6.500h11M3 9.500h6" stroke="#1c1c1c" />
              <circle cx="13" cy="12.500" r="3.600" fill="#1c1c1c" stroke="#fff" />
              <path d="m10.600 15 4.800-5" stroke="#fff" />
            </svg>
          </TrayItem>
          <ShowDesktop />
        </Tray>
      </Taskbar>
    </Desktop>
  );
}
